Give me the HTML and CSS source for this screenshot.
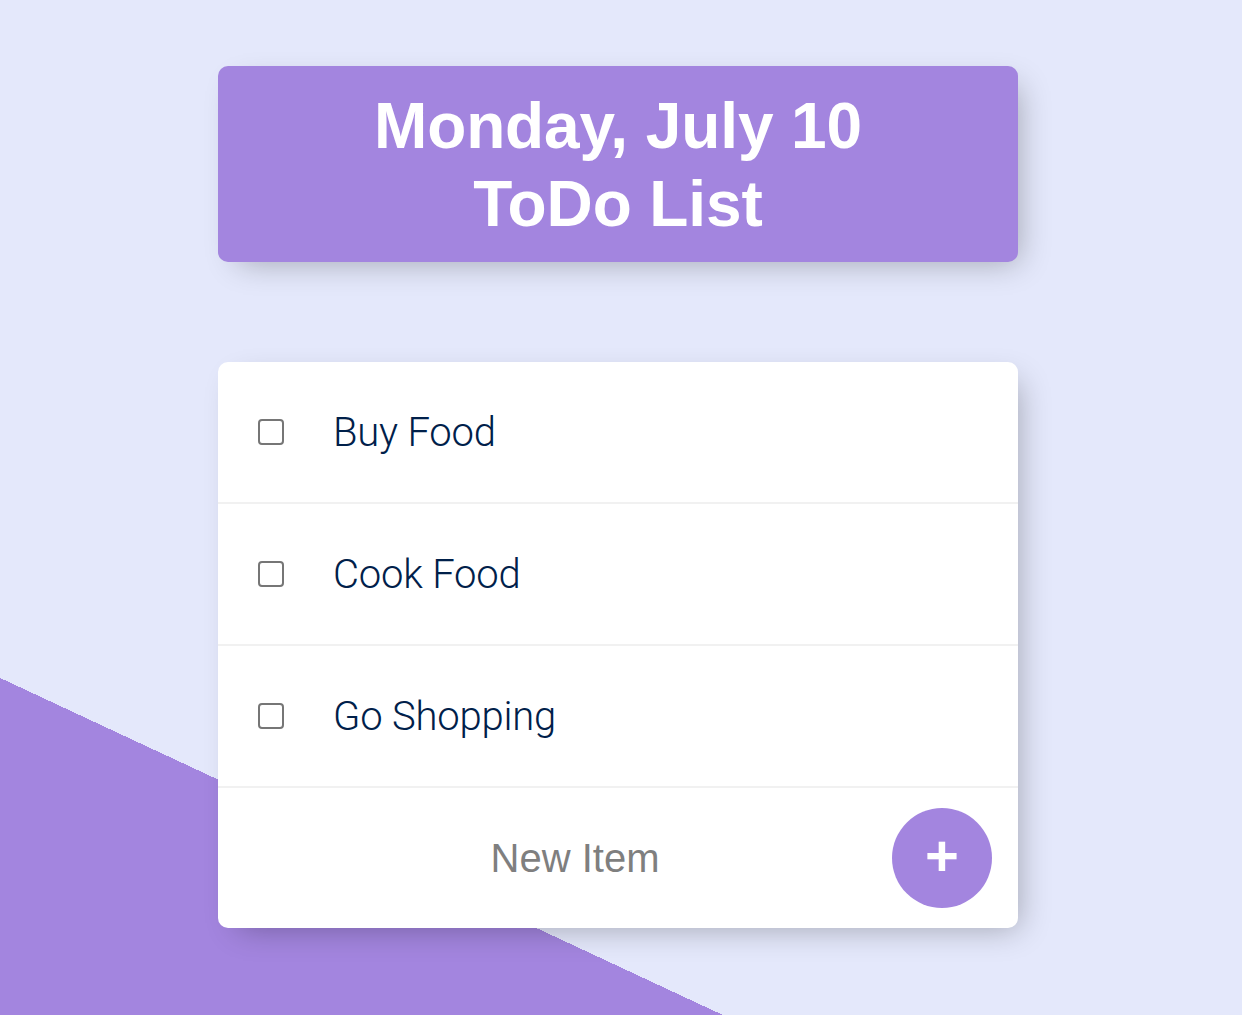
FILE: index.html
```html
<!DOCTYPE html>
<html lang="en">
<head>
<meta charset="utf-8">
<title>ToDo List</title>
<link rel="stylesheet" href="styles.css">
</head>
<body>
<main class="page">
  <header class="box heading">
    <h1 class="title">Monday, July 10<br>ToDo List</h1>
  </header>
  <section class="box list">
    <div class="item">
      <input class="check" type="checkbox">
      <p class="label">Buy Food</p>
    </div>
    <div class="item">
      <input class="check" type="checkbox">
      <p class="label">Cook Food</p>
    </div>
    <div class="item">
      <input class="check" type="checkbox">
      <p class="label">Go Shopping</p>
    </div>
    <form class="item new-item">
      <input class="new-input" type="text" name="newItem" placeholder="New Item" autocomplete="off">
      <button class="add" type="button">+</button>
    </form>
  </section>
</main>
</body>
</html>
```

FILE: styles.css
```css
html {
  min-height: 100%;
  background: #E4E8FB linear-gradient(25deg, #A385DF 50%, #E4E8FB 50%) no-repeat 0 0 / 1242px 1935px;
}

body {
  margin: 0;
  font-family: "Liberation Sans", Arial, sans-serif;
}

.page {
  width: 800px;
  margin-left: 218px;
  padding: 66px 0 60px;
  display: flex;
  flex-direction: column;
  gap: 100px;
}

.box {
  background: #fff;
  border-radius: 10px;
  box-shadow: 10px 10px 30px -10px rgba(0, 0, 0, 0.3);
}

.heading {
  background: #A385DF;
  text-align: center;
}

.title {
  margin: 0;
  padding: 21px 0 19px;
  color: #fff;
  font-size: 64px;
  line-height: 78px;
  font-weight: 700;
  letter-spacing: -0.1px;
}

.item {
  height: 140px;
  display: flex;
  align-items: center;
  border-bottom: 2px solid #F1F1F1;
}

.item:last-child {
  border-bottom: 0;
}

.check {
  appearance: none;
  -webkit-appearance: none;
  margin: 0 0 0 40px;
  width: 26px;
  height: 26px;
  box-sizing: border-box;
  border: 2px solid #767676;
  border-radius: 4px;
  background: #fff;
  flex: none;
}

.label {
  margin: 0 0 0 49px;
  font-family: Roboto, "Liberation Sans", sans-serif;
  font-weight: 300;
  font-size: 40px;
  color: #00204a;
  letter-spacing: -0.2px;
}

.new-item {
  margin: 0;
}

.new-input {
  margin-left: 40px;
  width: 626px;
  height: 120px;
  box-sizing: border-box;
  padding: 0 0 0 8px;
  border: none;
  background: transparent;
  text-align: center;
  font-family: "Liberation Sans", Arial, sans-serif;
  font-size: 40px;
  color: #00204a;
  outline: none;
}

.new-input::placeholder {
  color: #7f7f7f;
  opacity: 1;
}

.add {
  margin-left: 8px;
  width: 100px;
  height: 100px;
  border: 0;
  border-radius: 50%;
  background: #A385DF;
  color: #fff;
  font-family: "Liberation Sans", Arial, sans-serif;
  font-size: 58px;
  font-weight: 700;
  line-height: 1;
  padding: 0 0 4px;
  display: flex;
  align-items: center;
  justify-content: center;
  flex: none;
}
```
